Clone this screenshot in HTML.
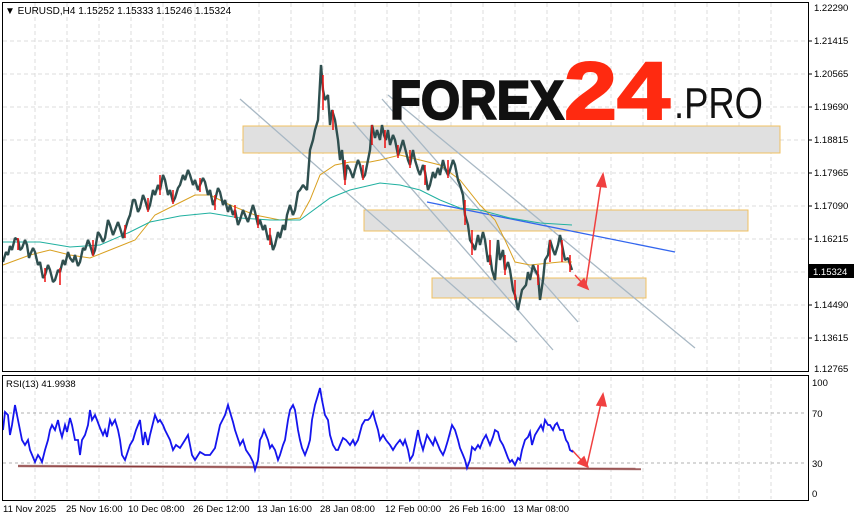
<!DOCTYPE html>
<html><head><meta charset="utf-8"><style>
html,body{margin:0;padding:0;background:#fff;}
svg{display:block;font-family:"Liberation Sans",sans-serif;}
</style></head><body>
<svg width="854" height="521" viewBox="0 0 854 521">
<rect width="854" height="521" fill="#fff"/>
<g stroke="#dcdcdc" stroke-dasharray="4,3" stroke-width="1">
<line x1="3" y1="41" x2="807" y2="41"/><line x1="3" y1="74" x2="807" y2="74"/><line x1="3" y1="107" x2="807" y2="107"/><line x1="3" y1="140" x2="807" y2="140"/><line x1="3" y1="173" x2="807" y2="173"/><line x1="3" y1="206" x2="807" y2="206"/><line x1="3" y1="239" x2="807" y2="239"/><line x1="3" y1="272" x2="807" y2="272"/><line x1="3" y1="305" x2="807" y2="305"/><line x1="3" y1="338" x2="807" y2="338"/>
<line x1="35" y1="3" x2="35" y2="371"/><line x1="67" y1="3" x2="67" y2="371"/><line x1="99" y1="3" x2="99" y2="371"/><line x1="131" y1="3" x2="131" y2="371"/><line x1="163" y1="3" x2="163" y2="371"/><line x1="195" y1="3" x2="195" y2="371"/><line x1="227" y1="3" x2="227" y2="371"/><line x1="259" y1="3" x2="259" y2="371"/><line x1="291" y1="3" x2="291" y2="371"/><line x1="323" y1="3" x2="323" y2="371"/><line x1="355" y1="3" x2="355" y2="371"/><line x1="387" y1="3" x2="387" y2="371"/><line x1="419" y1="3" x2="419" y2="371"/><line x1="451" y1="3" x2="451" y2="371"/><line x1="483" y1="3" x2="483" y2="371"/><line x1="515" y1="3" x2="515" y2="371"/><line x1="547" y1="3" x2="547" y2="371"/><line x1="579" y1="3" x2="579" y2="371"/><line x1="611" y1="3" x2="611" y2="371"/><line x1="643" y1="3" x2="643" y2="371"/><line x1="675" y1="3" x2="675" y2="371"/><line x1="707" y1="3" x2="707" y2="371"/><line x1="739" y1="3" x2="739" y2="371"/><line x1="771" y1="3" x2="771" y2="371"/>
<line x1="35" y1="377" x2="35" y2="499"/><line x1="67" y1="377" x2="67" y2="499"/><line x1="99" y1="377" x2="99" y2="499"/><line x1="131" y1="377" x2="131" y2="499"/><line x1="163" y1="377" x2="163" y2="499"/><line x1="195" y1="377" x2="195" y2="499"/><line x1="227" y1="377" x2="227" y2="499"/><line x1="259" y1="377" x2="259" y2="499"/><line x1="291" y1="377" x2="291" y2="499"/><line x1="323" y1="377" x2="323" y2="499"/><line x1="355" y1="377" x2="355" y2="499"/><line x1="387" y1="377" x2="387" y2="499"/><line x1="419" y1="377" x2="419" y2="499"/><line x1="451" y1="377" x2="451" y2="499"/><line x1="483" y1="377" x2="483" y2="499"/><line x1="515" y1="377" x2="515" y2="499"/><line x1="547" y1="377" x2="547" y2="499"/><line x1="579" y1="377" x2="579" y2="499"/><line x1="611" y1="377" x2="611" y2="499"/><line x1="643" y1="377" x2="643" y2="499"/><line x1="675" y1="377" x2="675" y2="499"/><line x1="707" y1="377" x2="707" y2="499"/><line x1="739" y1="377" x2="739" y2="499"/><line x1="771" y1="377" x2="771" y2="499"/>
</g>
<g stroke="#b0b0b0" stroke-dasharray="3,3"><line x1="3" y1="413" x2="807" y2="413"/><line x1="3" y1="463" x2="807" y2="463"/></g>
<g fill="#e0e0e0" stroke="#f0c060" stroke-width="1">
<rect x="243" y="126" width="537" height="27"/><rect x="364" y="210" width="384" height="21"/><rect x="432" y="278" width="214" height="20"/>
</g>
<g stroke="#a8b8c4" stroke-width="1.3">
<line x1="240" y1="99" x2="517" y2="342"/><line x1="353" y1="122" x2="553" y2="350"/><line x1="382" y1="99" x2="578" y2="322"/><line x1="388" y1="95" x2="695" y2="348"/>
</g>
<line x1="427" y1="202" x2="675" y2="252" stroke="#3366ee" stroke-width="1.3"/>
<polyline fill="none" stroke="#d9a020" stroke-width="1" points="3,265 30,255 50,250 70,255 90,258 110,250 135,240 155,215 175,205 195,195 210,195 230,205 255,215 280,220 300,218 310,200 320,175 335,165 350,162 370,162 380,160 400,155 420,160 440,165 460,180 480,205 495,220 505,240 515,262 530,265 560,262 572,262"/>
<polyline fill="none" stroke="#20b0a0" stroke-width="1" points="3,242 40,242 70,247 100,245 130,232 150,222 180,216 210,213 240,218 270,220 300,220 330,198 350,190 380,183 400,185 420,190 440,200 460,208 480,210 510,218 540,223 572,225"/>
<polyline fill="none" stroke="#2f4f4f" stroke-width="2.4" stroke-linejoin="bevel" points="3,262 6,252 8,255 10,246 12,250 15,238 18,240 20,250 22,248 25,240 27,245 29,258 30,255 33,248 35,252 38,265 40,262 43,278 45,275 48,265 50,270 53,282 55,280 58,270 60,272 63,260 65,265 68,252 70,258 73,262 75,255 78,266 80,262 83,248 85,250 88,240 90,245 93,255 95,250 98,232 100,235 103,242 105,238 108,220 110,225 113,235 115,230 118,222 120,228 123,238 125,230 128,220 130,215 133,200 135,200 138,212 140,208 143,195 145,200 148,210 150,205 153,190 155,195 158,185 160,190 163,175 165,180 168,195 170,190 173,202 175,198 178,188 180,185 183,175 185,180 188,170 190,175 193,185 195,180 198,190 200,185 203,178 205,182 208,195 210,190 213,205 215,200 218,188 220,192 223,205 225,200 228,212 230,205 233,215 235,210 238,225 240,220 243,210 245,215 248,222 250,215 253,205 255,212 258,225 260,220 263,230 265,225 268,240 270,235 273,250 275,245 278,232 280,238 283,225 285,230 287,215 290,205 293,215 295,210 298,192 300,190 303,185 307,190 310,150 313,140 315,130 318,120 321,65 323,90 325,100 328,95 330,125 332,110 335,120 338,140 340,160 342,150 345,180 347,165 350,170 353,178 355,170 358,160 360,165 363,178 365,175 368,160 370,150 372,125 375,138 377,130 380,140 382,125 384,135 386,140 388,130 390,145 393,135 395,140 398,155 400,150 403,140 405,148 408,160 410,165 413,150 415,160 418,170 420,175 423,165 425,172 428,190 430,185 433,172 435,178 438,168 440,175 443,160 445,168 448,175 450,170 453,160 455,165 458,180 460,185 463,195 465,215 468,225 470,240 473,245 475,250 478,235 480,245 483,232 485,240 488,262 490,255 492,270 495,280 498,240 500,260 503,250 505,270 508,262 510,270 513,290 515,295 518,310 520,300 522,290 526,285 528,272 530,280 533,265 535,270 538,275 540,300 543,280 545,260 548,255 550,240 553,250 555,255 558,245 560,235 563,250 565,260 568,258 572,270"/>
<g stroke="#ee1111" stroke-width="1.5">
<line x1="18" y1="238" x2="18" y2="250"/><line x1="45" y1="268" x2="45" y2="282"/><line x1="60" y1="268" x2="60" y2="285"/><line x1="93" y1="240" x2="93" y2="256"/><line x1="125" y1="225" x2="125" y2="238"/><line x1="148" y1="198" x2="148" y2="212"/><line x1="160" y1="175" x2="160" y2="195"/><line x1="173" y1="190" x2="173" y2="204"/><line x1="200" y1="178" x2="200" y2="192"/><line x1="215" y1="195" x2="215" y2="210"/><line x1="235" y1="205" x2="235" y2="218"/><line x1="258" y1="215" x2="258" y2="228"/><line x1="270" y1="228" x2="270" y2="245"/><line x1="323" y1="75" x2="323" y2="110"/><line x1="333" y1="110" x2="333" y2="130"/><line x1="345" y1="160" x2="345" y2="185"/><line x1="363" y1="165" x2="363" y2="180"/><line x1="372" y1="125" x2="372" y2="145"/><line x1="385" y1="130" x2="385" y2="148"/><line x1="398" y1="145" x2="398" y2="158"/><line x1="410" y1="150" x2="410" y2="168"/><line x1="425" y1="165" x2="425" y2="185"/><line x1="448" y1="160" x2="448" y2="178"/><line x1="465" y1="200" x2="465" y2="225"/><line x1="472" y1="230" x2="472" y2="255"/><line x1="490" y1="240" x2="490" y2="265"/><line x1="505" y1="255" x2="505" y2="275"/><line x1="515" y1="280" x2="515" y2="300"/><line x1="538" y1="265" x2="538" y2="285"/><line x1="550" y1="240" x2="550" y2="262"/><line x1="562" y1="240" x2="562" y2="262"/><line x1="570" y1="255" x2="570" y2="272"/>
</g>
<g stroke="#f04040" stroke-width="1.5" fill="#f04040">
<line x1="575" y1="275" x2="584" y2="285"/><polygon points="588,289 578,285 584,279"/>
<line x1="586" y1="284" x2="601" y2="184"/><polygon points="603,174 597,186 606,187"/>
<line x1="572" y1="450" x2="584" y2="463"/><polygon points="588,467 578,463 584,457"/>
<line x1="587" y1="465" x2="601" y2="403"/><polygon points="603,394 597,405 606,406"/>
</g>
<text x="390" y="119" font-family="'Liberation Sans',sans-serif" font-weight="bold" font-size="55" fill="#111" stroke="#111" stroke-width="2" textLength="174" lengthAdjust="spacingAndGlyphs">FOREX</text>
<text x="564" y="119" font-family="'Liberation Sans',sans-serif" font-weight="bold" font-size="82" fill="#ff2a10" stroke="#ff2a10" stroke-width="2" textLength="106" lengthAdjust="spacingAndGlyphs">24</text>
<text x="674" y="118" font-family="'Liberation Sans',sans-serif" font-weight="normal" font-size="44" fill="#111" textLength="89" lengthAdjust="spacingAndGlyphs">.PRO</text>
<line x1="18" y1="466" x2="641" y2="469" stroke="#b88888" stroke-width="2.5"/>
<line x1="18" y1="466" x2="641" y2="469" stroke="#7a2020" stroke-width="0.8"/>
<polyline fill="none" stroke="#1515ee" stroke-width="1.8" points="3,430 5,412 8,415 10,435 12,425 15,405 18,420 20,430 22,440 25,445 28,440 30,450 35,462 38,455 40,458 42,462 45,450 48,440 50,430 52,425 55,430 58,420 60,430 62,437 65,425 67,432 70,418 72,425 75,440 78,440 80,455 82,440 85,435 88,425 90,410 92,420 95,415 97,420 100,428 103,435 105,430 107,437 110,420 112,425 115,420 118,430 120,440 122,455 125,460 130,445 133,440 136,430 138,425 140,420 143,445 145,432 148,445 150,435 155,415 158,422 160,420 163,425 165,430 170,440 173,450 176,445 180,448 185,440 188,435 190,445 192,455 195,460 200,452 205,455 210,455 215,448 220,425 225,415 228,405 230,412 233,422 235,430 240,445 243,440 246,450 250,456 253,462 255,470 258,460 260,440 262,436 264,430 268,440 270,448 272,445 275,450 278,460 280,455 283,445 285,440 288,420 290,410 293,405 295,410 298,430 300,440 302,448 305,455 308,447 310,440 312,420 315,405 318,395 320,388 322,400 325,415 328,420 330,435 333,445 336,450 338,450 340,445 343,438 346,440 350,445 353,440 355,445 358,440 362,425 365,420 368,420 370,418 373,412 375,420 378,430 380,440 383,435 386,440 390,445 393,450 396,445 400,440 403,445 405,440 408,450 410,460 413,455 415,445 418,430 420,440 423,450 427,435 430,440 433,445 435,438 438,445 440,450 443,455 445,450 448,440 452,425 455,430 458,440 460,448 463,455 465,460 467,468 470,460 472,447 475,450 478,445 480,448 483,440 486,435 490,445 493,437 495,430 498,432 500,440 503,445 505,450 508,458 510,462 512,460 515,465 518,458 520,460 522,450 525,440 528,437 530,432 532,445 535,435 538,430 541,425 543,430 545,420 548,425 550,425 553,430 555,425 557,423 560,430 563,430 566,440 568,443 570,450 573,452"/>
<g fill="none" stroke="#000" stroke-width="1"><rect x="2.5" y="2.5" width="806" height="369"/><rect x="2.5" y="375.5" width="806" height="125"/></g>
<g stroke="#000"><line x1="808" y1="41" x2="812" y2="41"/><line x1="808" y1="74" x2="812" y2="74"/><line x1="808" y1="107" x2="812" y2="107"/><line x1="808" y1="140" x2="812" y2="140"/><line x1="808" y1="173" x2="812" y2="173"/><line x1="808" y1="206" x2="812" y2="206"/><line x1="808" y1="239" x2="812" y2="239"/><line x1="808" y1="305" x2="812" y2="305"/><line x1="808" y1="338" x2="812" y2="338"/></g>
<text x="5" y="14" font-size="10" fill="#000">▼ EURUSD,H4  1.15252 1.15333 1.15246 1.15324</text>
<g font-size="9.5" fill="#000">
<text x="814" y="11">1.22290</text><text x="814" y="44">1.21415</text><text x="814" y="77">1.20565</text><text x="814" y="110">1.19690</text><text x="814" y="143">1.18815</text><text x="814" y="176">1.17965</text><text x="814" y="209">1.17090</text><text x="814" y="242">1.16215</text><text x="814" y="308">1.14490</text><text x="814" y="341">1.13615</text><text x="814" y="372">1.12765</text>
<text x="812" y="386">100</text><text x="812" y="417">70</text><text x="812" y="467">30</text><text x="812" y="497">0</text>
</g>
<rect x="809" y="264" width="45" height="14" fill="#000"/>
<text x="813" y="275" font-size="9.5" fill="#fff">1.15324</text>
<text x="6" y="387" font-size="9.5" fill="#000">RSI(13) 41.9938</text>
<g font-size="9.5" fill="#000">
<text x="3" y="512">11 Nov 2025</text><text x="66" y="512">25 Nov 16:00</text><text x="128" y="512">10 Dec 08:00</text><text x="193" y="512">26 Dec 12:00</text><text x="257" y="512">13 Jan 16:00</text><text x="320" y="512">28 Jan 08:00</text><text x="385" y="512">12 Feb 00:00</text><text x="449" y="512">26 Feb 16:00</text><text x="513" y="512">13 Mar 08:00</text>
</g>
</svg>
</body></html>
